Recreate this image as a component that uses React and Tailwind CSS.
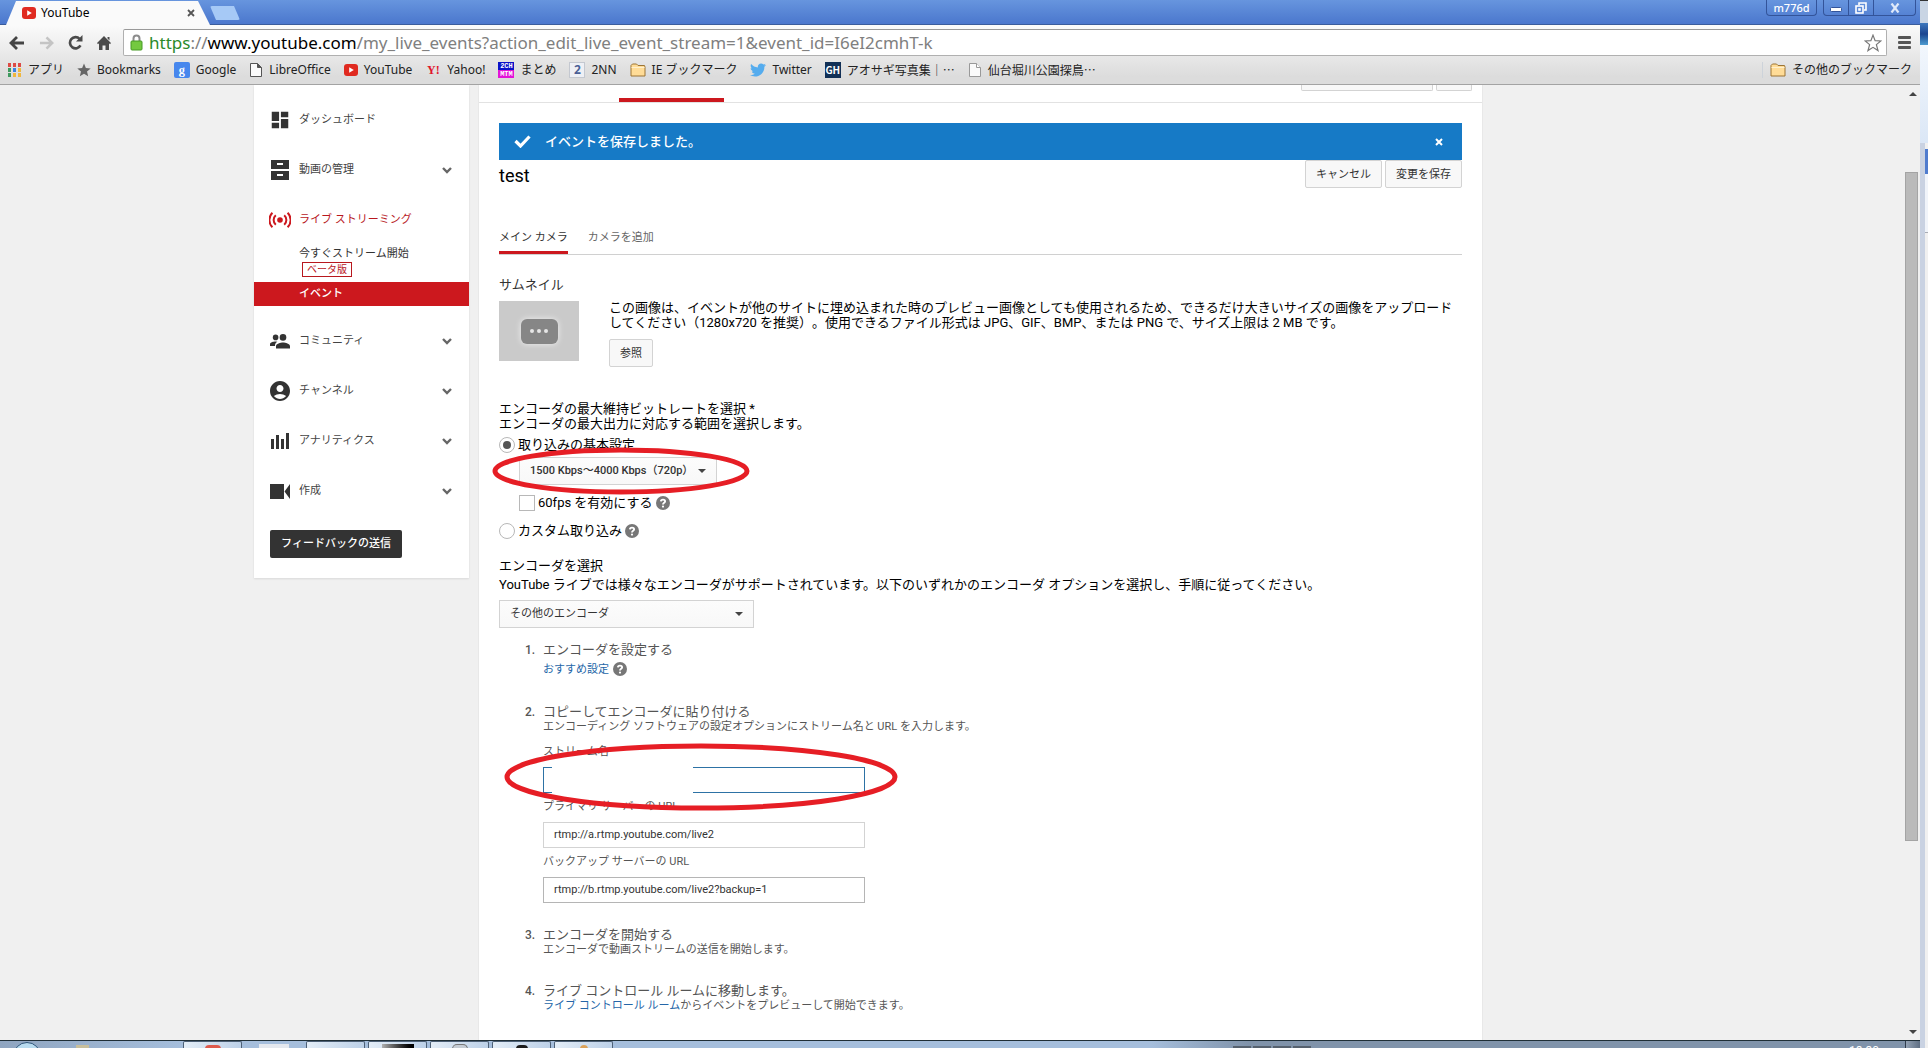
/**
 * Live event editor inside a desktop browser window.
 */
import { MdAccountCircle, MdDashboard } from "react-icons/md";
import { FaTwitter } from "react-icons/fa";

/* ---------- Icons ---------- */

function PlayIcon() {
  return (
    <svg width="14" height="12" viewBox="0 0 14 12" aria-hidden="true">
      <rect width="14" height="12" rx="3" fill="#e02a20" />
      <path d="M5.2 3.2v5.6L9.8 6z" fill="#fff" />
    </svg>
  );
}

function AppsIcon() {
  const colors = ["#dd4b45", "#dd4b45", "#dd4b45", "#3f9a5f", "#3b82e0", "#efb73e", "#3f9a5f", "#efb73e", "#efb73e"];
  return (
    <svg width="14" height="14" viewBox="0 0 14 14" aria-hidden="true">
      {colors.map((c, i) => (
        <rect key={i} x={(i % 3) * 5} y={Math.floor(i / 3) * 5} width="3" height="4" fill={c} />
      ))}
    </svg>
  );
}

function StarIcon() {
  return (
    <svg width="14" height="14" viewBox="0 0 24 24" aria-hidden="true">
      <path d="M12 1l3.2 7.6 8.3.7-6.3 5.4 1.9 8.1L12 18.5l-7.1 4.3 1.9-8.1L.5 9.3l8.3-.7z" fill="#666" />
    </svg>
  );
}

function PageIcon({ dark }) {
  return (
    <svg width="14" height="16" viewBox="0 0 14 16" aria-hidden="true">
      <path d="M1.5 1.5h7l4 4v9h-11z" fill="#fafafa" stroke={dark ? "#555" : "#999"} />
      <path d="M8.5 1.5v4h4" fill={dark ? "#555" : "#fff"} stroke={dark ? "#555" : "#999"} />
    </svg>
  );
}

function FolderIcon() {
  return (
    <svg width="16" height="14" viewBox="0 0 16 14" aria-hidden="true">
      <path d="M1 13V2.5L2.5 1h4L8 2.5h6.5L15 4v9z" fill="#ffdc97" stroke="#9c7434" />
      <path d="M1.5 4.5h13" stroke="#fff0cc" />
    </svg>
  );
}

function Tile({ className, children }) {
  return <span className={`flex h-4 w-4 items-center justify-center ${className}`}>{children}</span>;
}

function ChannelTile() {
  return (
    <span className="flex h-4 w-4 flex-col text-center font-mono text-[7px] font-bold leading-[8px] text-white">
      <span className="bg-[#0a12c8]">2CH</span>
      <span className="bg-[#e314d8]">MTM</span>
    </span>
  );
}

function CabinetIcon() {
  return (
    <svg width="20" height="22" viewBox="0 0 20 22" fill="#333" aria-hidden="true">
      <path d="M1 1h18v9H1zM1 12h18v9H1z" />
      <path d="M7 4h6v2H7zM7 15h6v2H7z" fill="#fff" />
    </svg>
  );
}

function LiveIcon() {
  return (
    <svg width="22" height="16" viewBox="0 0 22 16" fill="none" stroke="#cc181e" strokeWidth="2" aria-hidden="true">
      <circle cx="11" cy="8" r="2.8" fill="#cc181e" stroke="none" />
      <path d="M6.8 3.2a6.4 6.4 0 0 0 0 9.6M15.2 3.2a6.4 6.4 0 0 1 0 9.6M3.4.8a10 10 0 0 0 0 14.4M18.6.8a10 10 0 0 1 0 14.4" />
    </svg>
  );
}

function PeopleIcon() {
  return (
    <svg width="20" height="15" viewBox="0 0 20 15" fill="#333" aria-hidden="true">
      <circle cx="5.6" cy="3.4" r="2.8" />
      <circle cx="13" cy="3.4" r="3.3" />
      <path d="M0 12V10.4C0 8.4 3.4 7.6 5.6 7.6l1.8.2C5.6 8.8 5 10 5 12zM6 14.5v-2.3c0-2.4 4.6-3.6 7-3.6s7 1.2 7 3.6v2.3z" />
    </svg>
  );
}

function BarsIcon() {
  return (
    <svg width="18" height="16" viewBox="0 0 18 16" fill="#333" aria-hidden="true">
      <path d="M0 6h3v10H0zM5 2h3v14H5zM10 6h3v10h-3zM15 0h3v16h-3z" />
    </svg>
  );
}

function CameraIcon() {
  return (
    <svg width="20" height="15" viewBox="0 0 20 15" fill="#333" aria-hidden="true">
      <path d="M0 0h14v15H0zM20 0v15l-5.5-7.5z" />
    </svg>
  );
}

function ChevronIcon() {
  return (
    <svg width="10" height="7" viewBox="0 0 10 7" fill="none" stroke="#666" strokeWidth="2.4" aria-hidden="true">
      <path d="M1 1l4 4 4-4" />
    </svg>
  );
}

function HelpIcon() {
  return (
    <svg width="14" height="14" viewBox="0 0 14 14" role="img" aria-label="ヘルプ">
      <circle cx="7" cy="7" r="7" fill="#777" />
      <path d="M4.9 5.4C5 3 9.1 3.1 9.1 5.4 9.1 6.8 7 6.8 7 8.4" fill="none" stroke="#fff" strokeWidth="1.9" />
      <circle cx="7" cy="10.6" r="1.1" fill="#fff" />
    </svg>
  );
}

/* ---------- Browser chrome ---------- */

const bookmarks = [
  { label: "アプリ", icon: <AppsIcon /> },
  { label: "Bookmarks", icon: <StarIcon /> },
  {
    label: "Google",
    icon: <Tile className="rounded-xs bg-[#4787ed] font-serif text-xs leading-4 font-bold text-white">g</Tile>,
  },
  { label: "LibreOffice", icon: <PageIcon dark /> },
  { label: "YouTube", icon: <PlayIcon /> },
  {
    label: "Yahoo!",
    icon: <Tile className="text-xs leading-4 font-bold text-[#e0162b] [font-family:'Liberation_Serif',serif]">Y!</Tile>,
  },
  { label: "まとめ", icon: <ChannelTile /> },
  {
    label: "2NN",
    icon: <Tile className="bg-[#eef0f5] text-xs leading-4 font-bold text-[#4a5f96] outline -outline-offset-1 outline-[#c4c8d0]">2</Tile>,
  },
  { label: "IE ブックマーク", icon: <FolderIcon /> },
  { label: "Twitter", icon: <FaTwitter size={16} color="#55acee" /> },
  {
    label: "アオサギ写真集｜…",
    cjk: true,
    icon: <Tile className="bg-[#123056] text-[10px] leading-4 font-bold text-white">GH</Tile>,
  },
  { label: "仙台堀川公園探鳥…", cjk: true, icon: <PageIcon /> },
];

function TitleBar() {
  return (
    <div className="flex h-[25px] items-start border-b border-[#3a5c9c] bg-linear-to-b from-[#6795de] to-[#4b77cd] pl-[6px]">
      <div className="mt-px flex h-[24px] w-[204px] items-center bg-[#fafafa] pr-[15px] pl-4 [clip-path:polygon(0_100%,10px_0,192px_0,204px_100%)]">
        <PlayIcon />
        <span className="ml-[5px] flex-1 text-xs leading-4 text-black">YouTube</span>
        <button aria-label="タブを閉じる">
          <svg width="8" height="8" viewBox="0 0 8 8" stroke="#555" strokeWidth="1.8">
            <path d="M1 1l6 6M7 1L1 7" />
          </svg>
        </button>
      </div>
      <button
        aria-label="新しいタブ"
        className="mt-[6px] h-[14px] w-[30px] rounded-xs bg-[#a6c9f6] [clip-path:polygon(0_0,24px_0,30px_100%,6px_100%)]"
      />
      <div className="ml-auto flex h-4 gap-[6px] pr-1 text-white">
        <button className="h-4 w-[51px] rounded-b border border-t-0 border-[#33549a] text-[11px] leading-4 font-medium">
          m776d
        </button>
        <div className="flex rounded-b border border-t-0 border-[#33549a]">
          <button aria-label="最小化" className="flex w-[25px] items-center justify-center border-r border-[#33549a] pt-1">
            <svg width="12" height="6" viewBox="0 0 12 6">
              <rect x=".5" y=".5" width="11" height="4" rx="1" fill="#fff" stroke="#33549a" />
            </svg>
          </button>
          <button aria-label="元に戻す" className="flex w-[25px] items-center justify-center border-r border-[#33549a]">
            <svg width="12" height="12" viewBox="0 0 12 12" fill="none" stroke="#fff" strokeWidth="1.6">
              <path d="M4 3V1h7v7H9" />
              <rect x="1" y="4" width="7" height="7" />
              <rect x="4" y="7" width="1" height="1" />
            </svg>
          </button>
          <button aria-label="閉じる" className="flex w-[41px] items-center justify-center">
            <svg width="10" height="10" viewBox="0 0 10 10" stroke="#dfe9fa" strokeWidth="2.2">
              <path d="M1.5 0.5l7 9M8.5 0.5l-7 9" />
            </svg>
          </button>
        </div>
      </div>
    </div>
  );
}

function AddressBar() {
  return (
    <div className="flex h-[33px] items-center pt-1 pr-[9px] pb-[2px] pl-[9px]">
      <div className="flex w-[114px] items-center gap-[14px]">
        <button aria-label="戻る">
          <svg width="16" height="14" viewBox="0 0 16 14" fill="none" stroke="#444" strokeWidth="2.8">
            <path d="M15 7H3M8 1L2 7l6 6" />
          </svg>
        </button>
        <button aria-label="進む">
          <svg width="15" height="14" viewBox="0 0 16 14" fill="none" stroke="#c4c4c4" strokeWidth="2.8">
            <path d="M1 7h12M8 1l6 6-6 6" />
          </svg>
        </button>
        <button aria-label="再読み込み">
          <svg width="15" height="15" viewBox="0 0 15 15" fill="none" stroke="#4a4a4a" strokeWidth="2.6">
            <path d="M12.5 10.4A5.6 5.6 0 1 1 11.6 3.8" />
            <path d="M14.5 0v6.5H8z" fill="#4a4a4a" stroke="none" />
          </svg>
        </button>
        <button aria-label="ホーム">
          <svg width="14" height="14" viewBox="0 0 14 14" fill="#4a4a4a">
            <path d="M7 0l7 7-1 1.2-1-.9V14H8.5V9.5h-3V14H2V7.3l-1 .9L0 7l7-7zM10.5 1H12.5v3.5l-2-2z" />
          </svg>
        </button>
      </div>
      <div className="flex h-[27px] flex-1 items-center rounded-xs border border-[#b0b0b0] border-t-[#999] bg-white pr-1 pl-[6px]">
        <svg width="13" height="17" viewBox="0 0 13 17" aria-hidden="true">
          <path d="M3.5 8V4.5a3 3 0 0 1 6 0V8" fill="none" stroke="#8c8c8c" strokeWidth="2" />
          <rect x="1" y="7" width="11" height="9" rx="1" fill="#74c940" stroke="#469a24" />
        </svg>
        <div
          role="textbox"
          aria-label="アドレス"
          className="ml-[6px] flex-1 text-[17px] leading-6 whitespace-nowrap text-[#808080]"
        >
          <span className="text-[#2b8a2b]">https</span>://<span className="text-black">www.youtube.com</span>
          /my_live_events?action_edit_live_event_stream=1&amp;event_id=I6eI2cmhT-k
        </div>
        <button aria-label="ブックマークに追加">
          <svg width="18" height="18" viewBox="0 0 24 24" fill="#fff" stroke="#777" strokeWidth="1.6">
            <path d="M12 1.500l2.800 7.300 7.700.5-6 4.900 2.200 7.900L12 17.800l-6.700 4.300 2.200-7.900-6-4.900 7.700-.5z" />
          </svg>
        </button>
      </div>
      <button aria-label="メニュー" className="ml-[11px]">
        <svg width="13" height="13" viewBox="0 0 13 13" fill="#555">
          <rect width="13" height="3" rx="1" />
          <rect y="5" width="13" height="3" rx="1" />
          <rect y="10" width="13" height="3" rx="1" />
        </svg>
      </button>
    </div>
  );
}

function Bookmark({ icon, label, cjk }) {
  return (
    <a
      href="#"
      className={`flex items-center gap-[6px] whitespace-nowrap ${cjk ? "[font-family:'Noto_Sans_CJK_JP',sans-serif]" : ""}`}
    >
      {icon}
      {label}
    </a>
  );
}

function BookmarksBar() {
  return (
    <div className="flex h-[27px] items-center border-b border-[#a3a3a3] px-2 pb-[2px] text-xs leading-4 text-[#222]">
      <div className="flex items-center gap-[13px]">
        {bookmarks.map((b) => (
          <Bookmark key={b.label} {...b} />
        ))}
      </div>
      <div className="ml-auto border-l border-[#cdd3da] pl-[7px]">
        <Bookmark icon={<FolderIcon />} label="その他のブックマーク" />
      </div>
    </div>
  );
}

/* ---------- Sidebar ---------- */

function NavItem({ icon, label, active, expandable = true }) {
  return (
    <a
      href="#"
      className={`flex h-[50px] items-center pr-[17px] text-[11px] leading-4 ${active ? "text-[#b8181e]" : "text-[#444]"}`}
    >
      <span className="flex w-[51px] shrink-0 justify-center">{icon}</span>
      <span className="-ml-[6px] flex-1">{label}</span>
      {expandable && <ChevronIcon />}
    </a>
  );
}

function Sidebar() {
  return (
    <nav className="w-[215px] shrink-0 self-start bg-white pt-[10px] pb-5 shadow-[0_1px_2px_rgba(0,0,0,0.1)]">
      <NavItem icon={<MdDashboard size={22} color="#333" />} label="ダッシュボード" expandable={false} />
      <NavItem icon={<CabinetIcon />} label="動画の管理" />
      <NavItem icon={<LiveIcon />} label="ライブ ストリーミング" active expandable={false} />
      <a href="#" className="mt-px block pl-[45px] text-[11px] leading-4 text-[#333]">
        今すぐストリーム開始
        <span className="ml-[3px] block h-[15px] w-[50px] border border-[#b8181e] text-center text-[10px] leading-[13px] text-[#b8181e]">
          ベータ版
        </span>
      </a>
      <a href="#" className="mt-[5px] mb-[10px] block bg-[#cc181e] pl-[45px] text-[11px] leading-6 font-medium text-white">
        イベント
      </a>
      <NavItem icon={<PeopleIcon />} label="コミュニティ" />
      <NavItem icon={<MdAccountCircle size={24} color="#333" />} label="チャンネル" />
      <NavItem icon={<BarsIcon />} label="アナリティクス" />
      <NavItem icon={<CameraIcon />} label="作成" />
      <button className="mt-[14px] ml-4 block h-7 w-[132px] rounded-xs bg-[#333] text-[11px] leading-4 font-medium text-white">
        フィードバックの送信
      </button>
    </nav>
  );
}

/* ---------- Main form ---------- */

function Button({ children }) {
  return (
    <button className="h-7 rounded-xs border border-[#d3d3d3] bg-[#f8f8f8] px-[10px] pt-px text-[11px] leading-4 text-[#333]">
      {children}
    </button>
  );
}

function Select({ id, label, className, children }) {
  return (
    <div className={`relative h-7 ${className}`}>
      <select
        id={id}
        aria-label={label}
        className="h-full w-full appearance-none border border-[#d3d3d3] bg-linear-to-b from-[#fcfcfc] to-[#f8f8f8] pl-[10px] text-[11px] text-[#333]"
      >
        {children}
      </select>
      <svg className="absolute top-3 right-[11px]" width="8" height="4" viewBox="0 0 8 4" aria-hidden="true">
        <path d="M0 0h8L4 4z" fill="#444" />
      </svg>
    </div>
  );
}

function Radio({ id, label, defaultChecked, children }) {
  return (
    <div className="flex h-4 items-center">
      <input
        type="radio"
        name="ingestion"
        id={id}
        defaultChecked={defaultChecked}
        className="h-4 w-4 appearance-none rounded-full border border-[#b8b8b8] bg-clip-content p-[3px] checked:bg-[#555]"
      />
      <label htmlFor={id} className="mx-[3px]">
        {label}
      </label>
      {children}
    </div>
  );
}

function UrlField({ id, label, value, border }) {
  return (
    <>
      <label htmlFor={id} className="mt-[6px] block leading-[15px]">
        {label}
      </label>
      <input
        id={id}
        defaultValue={value}
        readOnly
        className={`mt-2 block h-[26px] w-[322px] border bg-white px-[10px] pb-[2px] text-[11px] text-[#333] ${border}`}
      />
    </>
  );
}

function Step({ number, title, className, children }) {
  return (
    <li className={`flex text-[#555] ${className}`}>
      <span className="w-[18px] shrink-0 text-xs leading-4 font-medium">{number}.</span>
      <div className="text-[11px] leading-[13px]">
        <h3 className="text-[13px] leading-4">{title}</h3>
        {children}
      </div>
    </li>
  );
}

function Banner() {
  return (
    <div className="mt-5 flex h-[37px] items-center bg-[#167ac6] pr-[19px] pl-[15px] text-white">
      <svg width="17" height="13" viewBox="0 0 17 13" fill="none" stroke="#fff" strokeWidth="3.2" aria-hidden="true">
        <path d="M1.5 6l5 5 9-9.500" />
      </svg>
      <span className="ml-[14px] flex-1 text-[13px] leading-4 font-medium">イベントを保存しました。</span>
      <button aria-label="閉じる">
        <svg width="8" height="8" viewBox="0 0 8 8" stroke="#fff" strokeWidth="2">
          <path d="M1 1l6 6M7 1L1 7" />
        </svg>
      </button>
    </div>
  );
}

function ThumbnailRow() {
  return (
    <div className="mt-[7px] flex">
      <div className="mt-px flex h-[60px] w-20 shrink-0 items-center justify-center bg-[#cacaca]">
        <div className="flex h-[25px] w-[37px] items-center justify-center gap-[3px] rounded-md bg-[#868686] shadow-[0_0_6px_rgba(255,255,255,0.7)]">
          <i className="h-1 w-1 rounded-full bg-[#e6e6e6]" />
          <i className="h-1 w-1 rounded-full bg-[#e6e6e6]" />
          <i className="h-1 w-1 rounded-full bg-[#e6e6e6]" />
        </div>
      </div>
      <div className="ml-[30px]">
        <p className="mb-[9px] leading-[15px]">
          この画像は、イベントが他のサイトに埋め込まれた時のプレビュー画像としても使用されるため、できるだけ大きいサイズの画像をアップロードしてください（1280x720
          を推奨）。使用できるファイル形式は JPG、GIF、BMP、または PNG で、サイズ上限は 2 MB です。
        </p>
        <Button>参照</Button>
      </div>
    </div>
  );
}

function BitrateSection() {
  return (
    <section className="mt-[34px]">
      <h2 className="leading-[15px]">エンコーダの最大維持ビットレートを選択 *</h2>
      <p className="mb-[6px] leading-[15px]">エンコーダの最大出力に対応する範囲を選択します。</p>
      <Radio id="basic" label="取り込みの基本設定" defaultChecked />
      <div className="relative mt-1 ml-5 w-[198px]">
        <Select id="bitrate" label="ビットレート" className="font-medium">
          <option>1500 Kbps～4000 Kbps（720p）</option>
        </Select>
        <svg
          className="pointer-events-none absolute -top-[10px] -left-[27px]"
          width="258"
          height="48"
          viewBox="0 0 258 48"
          aria-hidden="true"
        >
          <ellipse cx="129" cy="24" rx="126" ry="21" fill="none" stroke="#e61e25" strokeWidth="5" />
        </svg>
      </div>
      <div className="mt-[10px] mb-3 ml-5 flex h-4 items-center">
        <input type="checkbox" id="fps" className="h-4 w-4 appearance-none border border-[#b8b8b8] bg-white" />
        <label htmlFor="fps" className="mx-[3px]">
          60fps を有効にする
        </label>
        <HelpIcon />
      </div>
      <Radio id="custom" label="カスタム取り込み">
        <HelpIcon />
      </Radio>
    </section>
  );
}

function EncoderSection() {
  return (
    <section className="mt-[19px] pb-10">
      <h2>エンコーダを選択</h2>
      <p className="mt-[3px] mb-[7px]">
        YouTube ライブでは様々なエンコーダがサポートされています。以下のいずれかのエンコーダ オプションを選択し、手順に従ってください。
      </p>
      <Select id="encoder" label="エンコーダ" className="w-[255px]">
        <option>その他のエンコーダ</option>
      </Select>
      <ol className="pl-[26px]">
        <Step number={1} title="エンコーダを設定する" className="mt-[14px]">
          <div className="mt-[3px] flex h-4 items-center gap-1">
            <a href="#" className="text-[#2566a8]">
              おすすめ設定
            </a>
            <HelpIcon />
          </div>
        </Step>
        <Step number={2} title="コピーしてエンコーダに貼り付ける" className="mt-[27px]">
          <p>エンコーディング ソフトウェアの設定オプションにストリーム名と URL を入力します。</p>
          <div className="relative mt-[11px]">
            <label htmlFor="stream" className="block leading-[15px]">
              ストリーム名
            </label>
            <input id="stream" readOnly className="mt-2 block h-[26px] w-[322px] border border-[#2d72a5] bg-white px-[10px]" />
            {/* stream name is hidden */}
            <div className="absolute bottom-0 left-[9px] h-[26px] w-[141px] bg-white" />
            <svg
              className="pointer-events-none absolute -top-px -left-[39px] z-10"
              width="394"
              height="68"
              viewBox="0 0 394 68"
              aria-hidden="true"
            >
              <ellipse cx="197" cy="34" rx="194" ry="31" fill="none" stroke="#e61e25" strokeWidth="5" />
            </svg>
          </div>
          <UrlField
            id="primary"
            label="プライマリ サーバーの URL"
            value="rtmp://a.rtmp.youtube.com/live2"
            border="border-[#d3d3d3]"
          />
          <UrlField
            id="backup"
            label="バックアップ サーバーの URL"
            value="rtmp://b.rtmp.youtube.com/live2?backup=1"
            border="border-[#b5b5b5]"
          />
        </Step>
        <Step number={3} title="エンコーダを開始する" className="mt-6">
          <p>エンコーダで動画ストリームの送信を開始します。</p>
        </Step>
        <Step number={4} title="ライブ コントロール ルームに移動します。" className="mt-[27px]">
          <p>
            <a href="#" className="text-[#2566a8]">
              ライブ コントロール ルーム
            </a>
            からイベントをプレビューして開始できます。
          </p>
        </Step>
      </ol>
    </section>
  );
}

function EventEditor() {
  return (
    <main className="max-w-[1005px] flex-1 border-x border-[#e8e8e8] bg-white text-[13px] leading-4 text-black">
      <div className="flex h-[18px] items-end border-b border-[#e2e2e2] pl-[140px]">
        <div className="h-1 w-[105px] bg-[#cc181e]" />
        <div className="ml-auto flex gap-[3px] self-start pr-[10px]">
          <div className="h-[6px] w-[132px] rounded-b-xs border border-t-0 border-[#d3d3d3] bg-[#f8f8f8]" />
          <div className="h-[6px] w-[36px] rounded-b-xs border border-t-0 border-[#d3d3d3] bg-[#f8f8f8]" />
        </div>
      </div>
      <div className="px-5">
        <Banner />
        <div className="flex h-7 justify-between">
          <h1 className="text-lg leading-8">test</h1>
          <div className="flex gap-[3px]">
            <Button>キャンセル</Button>
            <Button>変更を保存</Button>
          </div>
        </div>
        <div className="mt-[41px] flex gap-5 border-b border-[#d0d0d0] text-[11px] leading-[18px]">
          <a href="#" className="border-b-3 border-[#cc181e] pb-1 text-[#333]">
            メイン カメラ
          </a>
          <a href="#" className="text-[#666]">
            カメラを追加
          </a>
        </div>
        <h2 className="mt-[22px] text-[#333]">サムネイル</h2>
        <ThumbnailRow />
        <BitrateSection />
        <EncoderSection />
      </div>
    </main>
  );
}

/* ---------- Window frame ---------- */

function Scrollbar() {
  return (
    <div className="flex w-[15px] shrink-0 flex-col items-center pt-[7px] pb-[6px]">
      <svg width="8" height="4" viewBox="0 0 8 4" aria-hidden="true">
        <path d="M4 0l4 4H0z" fill="#444" />
      </svg>
      <div className="flex min-h-0 w-full flex-1 flex-col pt-[76px] pr-[2px]">
        <div className="h-[78%] border border-[#a4a4a4] bg-[#bababa]" />
      </div>
      <svg width="8" height="4" viewBox="0 0 8 4" aria-hidden="true">
        <path d="M0 0h8L4 4z" fill="#444" />
      </svg>
    </div>
  );
}

function TaskButton({ children }) {
  return (
    <div className="flex h-2 w-[59px] items-end justify-center rounded-t-xs border border-b-0 border-[#4d6076] bg-linear-to-r from-[#e3edf7] to-[#bdd1e8]">
      {children}
    </div>
  );
}

function Taskbar() {
  return (
    <div className="flex h-2 shrink-0 items-start overflow-hidden border-t border-[#1f2e36] bg-linear-to-r from-[#a5bedc] from-60% to-[#8093aa] to-65%">
      <div className="flex w-[183px] bg-linear-to-r from-[#8fa5c0] to-[#a5bedc] pt-px pl-[13px]">
        <div className="h-7 w-7 rounded-full border border-[#2d5478] bg-[#b9dcf0]" />
        <div className="mt-[3px] ml-[35px] h-2 w-[13px] bg-[#c8bf9c]" />
      </div>
      <TaskButton>
        <i className="h-1 w-4 rounded-t-full bg-[#de5a4c]" />
      </TaskButton>
      <div className="mx-[17px] mt-[3px] h-2 w-[30px] bg-[#e4e8ee]" />
      <div className="flex gap-[3px]">
        <TaskButton />
        <TaskButton>
          <i className="h-[5px] w-8 bg-linear-to-r from-[#b0b0b0] to-black" />
        </TaskButton>
        <TaskButton>
          <i className="h-[5px] w-4 rounded-t-full border border-[#777] bg-[#c5ccd4]" />
        </TaskButton>
        <TaskButton>
          <i className="h-1 w-3 rounded-t-full bg-[#1c1c1c]" />
        </TaskButton>
        <TaskButton>
          <i className="h-1 w-2 rounded-t-full bg-[#dba25a]" />
        </TaskButton>
      </div>
      <div className="ml-auto flex w-[687px] items-start">
        <div className="mt-[5px] flex gap-[2px]">
          <i className="h-2 w-[18px] bg-[#56616e]" />
          <i className="h-2 w-[18px] bg-[#56616e]" />
          <i className="h-2 w-[18px] bg-[#56616e]" />
          <i className="h-2 w-[18px] bg-[#56616e]" />
        </div>
        <span className="mt-[2px] ml-auto pr-[26px] text-xs leading-4 text-white">18:30</span>
        <div className="h-2 w-[15px] border-l border-[#2f3c4c] bg-linear-to-r from-[#93a2b4] to-[#5f6f83]" />
      </div>
    </div>
  );
}

/** Edge of the window that sits behind the browser. */
function BackgroundWindow() {
  return (
    <div className="flex w-2 shrink-0 flex-col bg-[#f0f0f0]">
      <div className="h-[23px] border-t border-[#333] bg-[#c9d5e4]" />
      <div className="h-[22px] bg-linear-to-b from-[#3e78bd] via-[#1c4690] to-[#4e9bd0]" />
      <div className="h-[98px] bg-linear-to-b from-[#f2f7fd] to-[#dbe7f6]" />
      <div className="flex flex-1 flex-col border-l-[5px] border-[#c9d2e2]">
        <div className="mt-[6px] h-[25px] bg-[#4f7cce]" />
        <div className="h-[59px] border-b border-[#a8acb4] bg-[#f0f4fa]" />
      </div>
    </div>
  );
}

export default function App() {
  return (
    <div className="flex h-screen overflow-hidden bg-[#f0f0f0] [font-family:Roboto,'Noto_Sans_CJK_JP',sans-serif] [text-spacing-trim:space-all]">
      <div className="flex min-w-0 flex-1 flex-col">
        <header className="shrink-0 bg-linear-to-b from-[#fafafa] from-30% to-[#dcdcdc] to-90% [font-family:'Noto_Sans','Noto_Sans_CJK_JP',sans-serif]">
          <TitleBar />
          <AddressBar />
          <BookmarksBar />
        </header>
        <div className="flex min-h-0 flex-1">
          <div className="flex min-w-0 flex-1 gap-[9px] overflow-hidden pl-[254px]">
            <Sidebar />
            <EventEditor />
          </div>
          <Scrollbar />
        </div>
        <Taskbar />
      </div>
      <BackgroundWindow />
    </div>
  );
}
